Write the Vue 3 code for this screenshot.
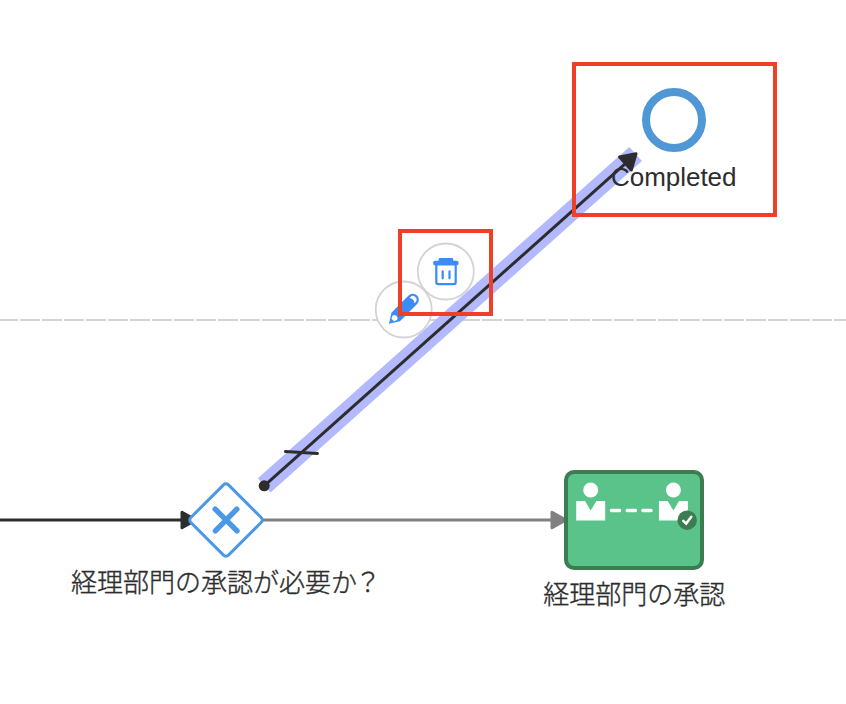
<script setup>
const people = [590.7, 673.4]
const labels = [
  { text: '経理部門の承認が必要か', tail: '？', x: 71, y: 591.5 },
  { text: '経理部門の承認', tail: '', x: 543.3, y: 603.5 },
]
</script>

<template>
  <main class="diagram">
    <svg class="canvas" viewBox="0 0 846 704" width="846" height="704">
      <line class="lane" x1="-2" y1="320" x2="846" y2="320" />

      <!-- Sequence flows -->
      <path class="flow" d="M0 520H182" />
      <path class="arrow" d="M182 512.200L196 520L182 527.800Z" />
      <path class="flow muted" d="M263 520H553" />
      <path class="arrow muted" d="M552 512.200L566 520L552 527.800Z" />

      <!-- Gateway -->
      <rect class="gateway" x="199.400" y="493.400" width="53.200" height="53.200" rx="3.500" transform="rotate(45 226 520)" />
      <path class="cross" d="M215.200 509.200L237 530.800M236.800 509.200L215.400 530.800" />

      <!-- Approval task -->
      <rect class="task" x="566" y="472" width="136" height="96" rx="8" />
      <g v-for="x in people" :key="x" class="person">
        <circle :cx="x" cy="490" r="7.500" />
        <path :transform="`translate(${x} 0)`" d="M-14.500 501H-5.700L0 510.500L5.700 501H14.500V520.600H-14.500Z" />
      </g>
      <path class="dashes" d="M611.500 510.500H619.500M627.300 510.500H635.300M643 510.500H651" />
      <circle class="badge" cx="687.200" cy="520.200" r="9.700" />
      <path class="check" d="M683.300 520.800L686.200 523.600L691.300 516.800" />

      <!-- End event -->
      <circle class="end" cx="674" cy="120" r="28" />

      <!-- Edge tools -->
      <circle class="tool" cx="403.700" cy="309.500" r="28" />
      <g transform="translate(403.300 309.300) rotate(-45)">
        <path class="glyph" fill-rule="evenodd" d="M-20.300 0L-10.800 -6H13.500A6 6 0 0 1 13.500 6H-10.800ZM-15 -1.800V1.800L-12 3.200A3.300 3.300 0 0 0 -12 -3.200ZM12.300 -3.600Q15 0 12.300 3.600H13.600A3.600 3.600 0 0 0 13.600 -3.600Z" />
      </g>
      <circle class="tool" cx="445.800" cy="271.500" r="28" />
      <path class="glyph" d="M439.500 258H452.500Q453.300 258 453.300 260.800H456.500Q458.700 260.800 458.700 263T456.500 265.600H435.300Q433.100 265.600 433.100 263T435.300 260.800H438.500Q438.500 258 439.500 258Z" />
      <path class="bin" d="M436.300 264V282.300Q436.300 284.200 438.300 284.200H453.700Q455.700 284.200 455.700 282.300V264M442.700 271.300V278.300M449.500 271.300V278.300" />

      <!-- Selected flow -->
      <path class="halo" d="M264.200 485.300L635.600 154" />
      <path class="flow" d="M264.200 485.800L627 162.200" />
      <circle class="source" cx="264.200" cy="485.800" r="5.500" />
      <path class="arrow" d="M619.500 157L636 153.800L631.300 170Z" />
      <path class="slash" d="M285.500 451.600L317.500 453.500" />

      <text class="label" x="611" y="186" textLength="125.500">Completed</text>
      <text v-for="label in labels" :key="label.text" class="label jp" :x="label.x" :y="label.y">{{ label.text }}<tspan v-if="label.tail" dx="-2">{{ label.tail }}</tspan></text>

      <!-- Callouts -->
      <rect class="callout" x="400" y="231" width="91" height="83" />
      <rect class="callout" x="574" y="64" width="201" height="151" />
    </svg>
  </main>
</template>

<style>
body {
  margin: 0;
  background: #fff;
}
</style>

<style scoped>
.diagram {
  width: 846px;
  height: 704px;
  overflow: hidden;
}
.canvas {
  display: block;
}
.lane {
  stroke: #d3d3d3;
  stroke-width: 2;
  stroke-dasharray: 20 2;
}
.flow {
  fill: none;
  stroke: #2d2d2d;
  stroke-width: 3;
}
.flow.muted {
  stroke: #808080;
}
.arrow {
  fill: #2d2d2d;
  stroke: #2d2d2d;
  stroke-width: 3;
  stroke-linejoin: round;
}
.arrow.muted {
  fill: #808080;
  stroke: #808080;
}
.gateway {
  fill: #fff;
  stroke: #4b98e8;
  stroke-width: 3;
}
.cross {
  stroke: #4b98e8;
  stroke-width: 5.4;
  stroke-linecap: round;
}
.task {
  fill: #59c389;
  stroke: #3d7b51;
  stroke-width: 4;
}
.person {
  fill: #fff;
}
.dashes {
  stroke: #fff;
  stroke-width: 3.6;
  stroke-linecap: round;
}
.badge {
  fill: #3d7b51;
}
.check {
  fill: none;
  stroke: #fff;
  stroke-width: 2.5;
  stroke-linecap: round;
}
.end {
  fill: #fff;
  stroke: #5097d5;
  stroke-width: 8;
}
.label {
  font: 26px "Liberation Sans", Arial, sans-serif;
  fill: #2d2d2d;
}
.label.jp {
  font-family: "Noto Sans CJK JP", sans-serif;
  font-weight: 300;
  stroke: #2d2d2d;
  stroke-width: 0.4;
}
.tool {
  fill: #fff;
  stroke: #d3d3d6;
  stroke-width: 1.8;
}
.glyph {
  fill: #3b8cf8;
}
.bin {
  fill: none;
  stroke: #3b8cf8;
  stroke-width: 2.2;
  stroke-linecap: round;
}
.halo {
  stroke: #b3b9ff;
  stroke-width: 19;
}
.source {
  fill: #2d2d2d;
}
.slash {
  stroke: #2d2d2d;
  stroke-width: 3;
  stroke-linecap: round;
}
.callout {
  fill: none;
  stroke: #ee4026;
  stroke-width: 4;
}
</style>
